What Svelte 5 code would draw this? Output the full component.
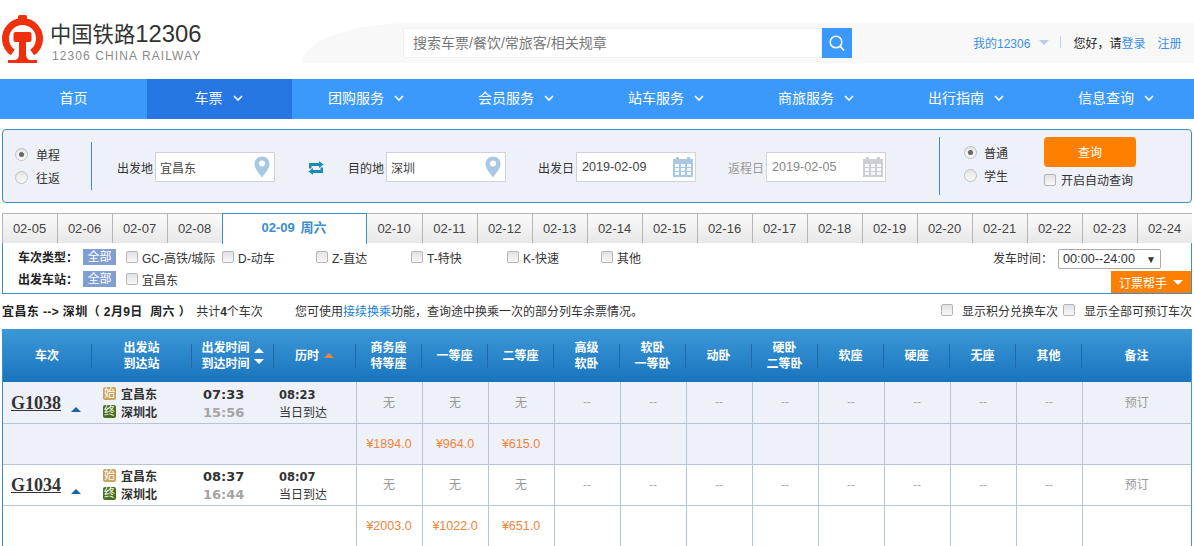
<script>
  const navItems = [
    { label: '车票', active: true },
    { label: '团购服务' },
    { label: '会员服务' },
    { label: '站车服务' },
    { label: '商旅服务' },
    { label: '出行指南' },
    { label: '信息查询' }
  ];

  const datesBefore = ['02-05', '02-06', '02-07', '02-08'];
  const datesAfter = ['02-10', '02-11', '02-12', '02-13', '02-14', '02-15', '02-16', '02-17', '02-18', '02-19', '02-20', '02-21', '02-22', '02-23', '02-24'];

  const trainTypes = [
    { label: 'GC-高铁/城际', width: 96 },
    { label: 'D-动车', width: 94 },
    { label: 'Z-直达', width: 95 },
    { label: 'T-特快', width: 96 },
    { label: 'K-快速', width: 94 },
    { label: '其他', width: 94 }
  ];

  const seatHeads = [
    ['商务座', '特等座'], ['一等座'], ['二等座'], ['高级', '软卧'], ['软卧', '一等卧'], ['动卧'],
    ['硬卧', '二等卧'], ['软座'], ['硬座'], ['无座'], ['其他']
  ];

  const trains = [
    { no: 'G1038', dep: '07:33', arr: '15:56', dur: '08:23', prices: ['¥1894.0', '¥964.0', '¥615.0'], odd: true },
    { no: 'G1034', dep: '08:37', arr: '16:44', dur: '08:07', prices: ['¥2003.0', '¥1022.0', '¥651.0'], odd: false }
  ];

  const emptySeats = Array(8).fill('--');
  const emptyPrices = Array(9).fill('');
</script>

{#snippet chevron()}
  <svg class="chevron" width="10" height="7" viewBox="0 0 10 7"><path d="M1 1l4 4 4-4" fill="none" stroke="#fff" stroke-width="1.6" /></svg>
{/snippet}

{#snippet pin()}
  <svg class="field-icon" width="16" height="22" viewBox="0 0 16 22">
    <path d="M8 0.5C3.6 0.5 0.5 3.8 0.5 8c0 5 5 9.500 7.500 13.500C10.500 17.500 15.500 13 15.500 8 15.500 3.800 12.400 0.500 8 0.500z" fill="#a9c8e2" />
    <circle cx="8" cy="7.500" r="3" fill="#fff" />
  </svg>
{/snippet}

{#snippet calendar(color)}
  <svg class="field-icon cal" width="20" height="20" viewBox="0 0 20 20">
    <rect x="0" y="2" width="20" height="18" fill={color} />
    <rect x="3" y="0" width="3" height="4" fill={color} />
    <rect x="14" y="0" width="3" height="4" fill={color} />
    <g fill="#f4f7fb">
      <rect x="2" y="7" width="4" height="3" /><rect x="8" y="7" width="4" height="3" /><rect x="14" y="7" width="4" height="3" />
      <rect x="2" y="11" width="4" height="3" /><rect x="8" y="11" width="4" height="3" /><rect x="14" y="11" width="4" height="3" />
      <rect x="2" y="15" width="4" height="3" /><rect x="8" y="15" width="4" height="3" /><rect x="14" y="15" width="4" height="3" />
    </g>
  </svg>
{/snippet}

<header class="top">
  <div class="brand">
    <svg class="logo" width="46" height="50" viewBox="0 14 46 50">
      <path d="M12.800 52.500A17 17 0 1 1 32.200 52.500" fill="none" stroke="#f0300c" stroke-width="7" />
      <rect x="18" y="15" width="9" height="5" rx="2" fill="#f0300c" />
      <path d="M15.500 32h14q2 0 2 2v6q0 2-2 2h-3.500v13q0 3 3 5h8v3H8v-3h8q3-2 3-5V42h-3.500q-2 0-2-2v-6q0-2 2-2z" fill="#f0300c" />
    </svg>
    <div class="brand-text">
      <div class="brand-name">中国铁路<span>12306</span></div>
      <div class="brand-sub">12306 CHINA RAILWAY</div>
    </div>
  </div>
  <div class="top-right">
    <div class="search-box">搜索车票/餐饮/常旅客/相关规章</div>
    <div class="search-btn">
      <svg width="18" height="18" viewBox="0 0 18 18"><circle cx="8" cy="8" r="5.800" fill="none" stroke="#fff" stroke-width="1.500" /><path d="M12 12l4 4.500" stroke="#fff" stroke-width="1.700" /></svg>
    </div>
    <div class="account">
      <span class="blue">我的12306</span>
      <i class="tri-down"></i>
      <i class="sep"></i>
      <span class="hello">您好，请<span class="blue">登录</span></span>
      <span class="blue reg">注册</span>
    </div>
  </div>
</header>

<nav class="nav">
  <div class="nav-item home">首页</div>
  {#each navItems as item}
    <div class="nav-item" class:active={item.active}>{item.label}{@render chevron()}</div>
  {/each}
</nav>

<section class="panel">
  <div class="trip-type">
    <label class="radio-line"><i class="radio on"></i>单程</label>
    <label class="radio-line"><i class="radio"></i>往返</label>
  </div>
  <div class="field from">
    <span>出发地</span>
    <div class="input">宜昌东{@render pin()}</div>
  </div>
  <svg class="swap" width="16" height="14" viewBox="0 0 16 14">
    <path d="M11 0l4.500 3.500L11 7V5H3.500v2.500H1V2h10z" fill="#1a8bb8" />
    <path d="M5 14L0.500 10.500 5 7v2h7.500V6.500H15V12H5z" fill="#1a8bb8" />
  </svg>
  <div class="field to">
    <span>目的地</span>
    <div class="input">深圳{@render pin()}</div>
  </div>
  <div class="field date">
    <span>出发日</span>
    <div class="input num">2019-02-09{@render calendar('#a9c8e2')}</div>
  </div>
  <div class="field date disabled">
    <span>返程日</span>
    <div class="input num">2019-02-05{@render calendar('#cbcfd6')}</div>
  </div>
  <div class="ticket-type">
    <label class="radio-line"><i class="radio on"></i>普通</label>
    <label class="radio-line"><i class="radio"></i>学生</label>
  </div>
  <div class="query">
    <button class="query-btn">查询</button>
    <label class="auto"><i class="cb"></i>开启自动查询</label>
  </div>
</section>

<div class="tabs">
  {#each datesBefore as d}<div class="tab">{d}</div>{/each}
  <div class="tab current">02-09 周六</div>
  {#each datesAfter as d}<div class="tab">{d}</div>{/each}
</div>

<section class="filter">
  <div class="filter-left">
    <div class="filter-row">
      <b class="filter-label">车次类型：</b>
      <span class="all">全部</span>
      {#each trainTypes as t}
        <label class="opt" style="width: {t.width}px"><i class="cb"></i>{t.label}</label>
      {/each}
    </div>
    <div class="filter-row">
      <b class="filter-label">出发车站：</b>
      <span class="all">全部</span>
      <label class="opt"><i class="cb"></i>宜昌东</label>
    </div>
  </div>
  <div class="filter-right">
    <div class="time-row">
      <span>发车时间：</span>
      <div class="time-select">00:00--24:00<i>▼</i></div>
    </div>
    <div class="helper">订票帮手<i class="tri-down white"></i></div>
  </div>
</section>

<div class="summary">
  <div class="sum-left"><b>宜昌东 --&gt; 深圳（ 2月9日&nbsp; 周六 ）</b><span class="count">共计<b>4</b>个车次</span></div>
  <div class="sum-mid">您可使用<span class="link">接续换乘</span>功能，查询途中换乘一次的部分列车余票情况。</div>
  <div class="sum-right">
    <label><i class="cb"></i>显示积分兑换车次</label>
    <label><i class="cb"></i>显示全部可预订车次</label>
  </div>
</div>

<div class="table-wrap">
  <table>
    <colgroup>
      <col style="width: 89px" /><col style="width: 100px" /><col style="width: 82px" /><col style="width: 82px" />
      {#each seatHeads as _}<col style="width: 66px" />{/each}
      <col style="width: 109px" />
    </colgroup>
    <thead>
      <tr>
        <th><div class="th">车次</div></th>
        <th><div class="th">出发站<br />到达站</div></th>
        <th>
          <div class="th sort">
            <span>出发时间<br />到达时间</span>
            <span class="arrows"><i class="tri-up white"></i><i class="tri-down white"></i></span>
          </div>
        </th>
        <th><div class="th sort">历时<i class="tri-up orange"></i></div></th>
        {#each seatHeads as h}
          <th><div class="th">{#each h as line, i}{#if i}<br />{/if}{line}{/each}</div></th>
        {/each}
        <th><div class="th last">备注</div></th>
      </tr>
    </thead>
    <tbody>
      {#each trains as t}
        <tr class:odd={t.odd}>
          <td class="info no"><span class="train-no">{t.no}</span><i class="tri-up navy"></i></td>
          <td class="info">
            <div class="station"><i class="badge start">始</i>宜昌东</div>
            <div class="station"><i class="badge end">终</i>深圳北</div>
          </td>
          <td class="info times"><b>{t.dep}</b><b class="arr">{t.arr}</b></td>
          <td class="info dur"><b>{t.dur}</b><span>当日到达</span></td>
          <td class="seat">无</td><td class="seat">无</td><td class="seat">无</td>
          {#each emptySeats as s}<td class="seat dash">{s}</td>{/each}
          <td class="seat">预订</td>
        </tr>
        <tr class:odd={t.odd}>
          <td colspan="4" class="info"></td>
          {#each t.prices as p}<td class="seat price">{p}</td>{/each}
          {#each emptyPrices as e}<td class="seat blank">{e}</td>{/each}
        </tr>
      {/each}
    </tbody>
  </table>
</div>

<style>
  :global(body) {
    margin: 0;
    overflow: hidden;
    background: #fff;
    font-family: "Liberation Sans", "Noto Sans CJK SC", sans-serif;
    font-size: 12px;
    color: #333;
  }

  i { font-style: normal; display: inline-block; }
  label { display: inline-flex; align-items: center; }

  .blue { color: #3b8fe8; }

  /* top bar */
  .top {
    display: flex;
    height: 79px;
  }

  .brand {
    display: flex;
    width: 302px;
    flex: none;
  }

  .logo { margin-top: 14px; flex: none; }

  .brand-text { margin-left: 4px; }

  .brand-name {
    margin-top: 20px;
    height: 28px;
    line-height: 28px;
    font-size: 21.300px;
    color: #333;
    white-space: nowrap;
  }

  .brand-name span { font-size: 23.800px; }

  .brand-sub {
    margin-top: 1px;
    margin-left: 2px;
    font-size: 12px;
    line-height: 14px;
    letter-spacing: 1.100px;
    color: #8a8a8a;
    white-space: nowrap;
  }

  .top-right {
    flex: 1;
    display: flex;
    align-items: center;
    height: 40px;
    margin-top: 23px;
    padding-left: 101px;
    background: #f8f8f8;
    border-top-left-radius: 110px 40px;
  }

  .search-box {
    width: 408px;
    height: 28px;
    line-height: 28px;
    padding-left: 9px;
    border: 1px solid #f0f0f0;
    background: #fff;
    font-size: 14px;
    color: #777;
  }

  .search-btn {
    width: 30px;
    height: 30px;
    background: #3b99fc;
    display: flex;
    align-items: center;
    justify-content: center;
  }

  .account {
    display: flex;
    align-items: center;
    margin-left: 121px;
    padding-bottom: 2px;
    white-space: nowrap;
  }

  .sep {
    width: 1px;
    height: 12px;
    background: #b9d4ef;
    margin: 0 12px 0 11px;
  }

  .hello { color: #222; }
  .reg { margin-left: 12px; }

  .tri-down {
    width: 0;
    height: 0;
    border: 5px solid transparent;
    border-top: 5px solid #b4cdea;
    border-bottom: 0;
    margin-left: 9px;
  }

  .tri-down.white { border-top-color: #fff; margin-left: 0; }

  .tri-up {
    width: 0;
    height: 0;
    border: 5px solid transparent;
    border-bottom: 5px solid #fff;
    border-top: 0;
  }

  .tri-up.orange { border-bottom-color: #f0853c; margin-left: 1px; }
  .tri-up.navy { border-bottom-color: #1565ad; margin-left: 10px; vertical-align: -3px; }

  /* nav */
  .nav {
    display: flex;
    height: 40px;
    background: #3b99fc;
    color: #fff;
    font-size: 14px;
  }

  .nav-item {
    width: 148px;
    padding: 0 2px 5px 0;
    box-sizing: content-box;
    height: 35px;
    display: flex;
    align-items: center;
    justify-content: center;
  }

  .nav-item.home { width: 147px; padding-right: 0; }
  .nav-item.active { width: 143px; background: #2676e3; }

  .chevron { margin-left: 10px; margin-top: 3px; }

  /* search panel */
  .panel {
    display: flex;
    height: 72px;
    margin: 10px 2px 0;
    border: 1px solid #3a8fc4;
    border-radius: 4px;
    background: #eef1f8;
  }

  .trip-type {
    width: 76px;
    height: 48px;
    margin-top: 12px;
    padding-left: 12px;
    border-right: 1px solid #3a8fc4;
    display: flex;
    flex-direction: column;
    justify-content: center;
    gap: 7px;
    flex: none;
  }

  .radio-line {
    height: 16px;
    color: #333;
    white-space: nowrap;
  }

  .radio {
    width: 11px;
    height: 11px;
    border-radius: 50%;
    border: 1px solid #c0c0c0;
    background: linear-gradient(#e4e4e4, #fafafa);
    margin-right: 8px;
    position: relative;
  }

  .radio.on::after {
    content: '';
    position: absolute;
    left: 3px;
    top: 3px;
    width: 5px;
    height: 5px;
    border-radius: 50%;
    background: #666;
  }

  .field {
    display: flex;
    align-items: center;
    margin-top: 22px;
    height: 30px;
    flex: none;
    white-space: nowrap;
  }

  .field > span { width: 36px; margin-right: 2px; color: #333; }
  .field.from { margin-left: 25px; }
  .field.to { margin-left: 24px; }
  .field.date { margin-left: 32px; }
  .field.disabled { color: #999; }
  .field.disabled > span { color: #999; }

  .input {
    width: 114px;
    height: 28px;
    padding-left: 4px;
    display: flex;
    align-items: center;
    justify-content: space-between;
    border: 1px solid #cfd3d9;
    background: #fff;
    color: #444;
  }

  .input.num { padding-left: 5px; width: 113px; font-size: 12.600px; }
  .disabled .input { color: #888; }

  .field-icon { margin-right: 4px; }
  .field-icon.cal { margin-right: 2px; }

  .swap { margin: 31px 0 0 33px; flex: none; }

  .ticket-type {
    width: 80px;
    height: 51px;
    margin: 7px 0 0 53px;
    padding: 7px 0 0 24px;
    border-left: 1px solid #3a8fc4;
    display: flex;
    flex-direction: column;
    gap: 7px;
    flex: none;
    box-sizing: content-box;
  }

  .ticket-type .radio { margin-right: 7px; }

  .query {
    width: 92px;
    margin-top: 7px;
    flex: none;
  }

  .query-btn {
    display: block;
    width: 92px;
    height: 30px;
    padding: 0 0 2px;
    border: 0;
    border-radius: 4px;
    background: #ff8000;
    color: #fff;
    font-family: inherit;
    font-size: 12px;
  }

  .auto {
    margin-top: 4px;
    color: #333;
    white-space: nowrap;
  }

  .cb {
    width: 10px;
    height: 10px;
    border: 1px solid #b5b5b5;
    border-radius: 2px;
    background: linear-gradient(#e2e2e2, #f8f8f8);
    margin-right: 5px;
    flex: none;
  }

  /* date tabs */
  .tabs {
    display: flex;
    height: 30px;
    margin: 10px 2px -1px;
    position: relative;
  }

  .tab {
    width: 55px;
    box-sizing: border-box;
    padding-right: 1px;
    border-top: 1px solid #b5b5b5;
    border-left: 1px solid #b5b5b5;
    background: linear-gradient(#fafafa, #e8e8e8);
    font-size: 13px;
    line-height: 30px;
    text-align: center;
    color: #444;
  }

  .tab.current {
    width: 145px;
    border: 1px solid #3a8fc4;
    border-bottom: 0;
    background: #fff;
    font-weight: bold;
    color: #3b8ccc;
    height: 31px;
    line-height: 28px;
    word-spacing: 2px;
  }

  .tab.current + .tab { border-left: 0; }

  /* filter */
  .filter {
    display: flex;
    justify-content: space-between;
    height: 50px;
    margin: 0 2px;
    border: 1px solid #3a8fc4;
    background: #fff;
  }

  .filter-left { padding: 3px 0 0 15px; }

  .filter-row {
    display: flex;
    align-items: center;
    height: 22px;
    white-space: nowrap;
  }

  .filter-label { width: 65px; color: #222; padding-bottom: 2px; }

  .all {
    width: 33px;
    height: 16px;
    line-height: 16px;
    text-align: center;
    background: #7f9fd3;
    color: #fff;
    margin-right: 10px;
  }

  .opt { color: #333; }
  .opt .cb { margin-right: 4px; }

  .filter-right {
    display: flex;
    flex-direction: column;
    align-items: flex-end;
    justify-content: space-between;
  }

  .time-row {
    display: flex;
    align-items: center;
    margin: 6px 30px 0 0;
    color: #333;
  }

  .time-select {
    width: 93px;
    height: 18px;
    padding: 0 4px;
    display: flex;
    align-items: center;
    justify-content: space-between;
    border: 1px solid #aaa;
    border-radius: 2px;
    font-size: 12.700px;
    white-space: nowrap;
  }

  .time-select i { font-size: 10px; }

  .time-row > span { width: 65px; padding-bottom: 3px; }

  .helper {
    width: 80px;
    height: 22px;
    display: flex;
    align-items: center;
    justify-content: center;
    gap: 6px;
    background: #ff8000;
    color: #fff;
  }

  /* summary */
  .summary {
    display: flex;
    align-items: center;
    box-sizing: border-box;
    height: 35px;
    padding-bottom: 3px;
    margin: 0 2px;
    white-space: nowrap;
    color: #333;
  }

  .sum-left { width: 293px; flex: none; }
  .sum-left > b { color: #222; letter-spacing: 0.4px; }
  .count { margin-left: 5px; }
  .link { color: #1a7fd4; }

  .sum-right {
    margin-left: auto;
    display: flex;
    gap: 5px;
  }

  .sum-right .cb { margin-right: 9px; }

  /* result table */
  .table-wrap {
    margin: 0 2px;
    border-left: 1px solid #3a8fc4;
    border-right: 1px solid #3a9fd0;
  }

  table {
    width: 1188px;
    table-layout: fixed;
    border-collapse: collapse;
  }

  thead tr {
    height: 53px;
    background: linear-gradient(#3c98d8, #1a74bd);
  }

  th {
    padding: 0;
    color: #fff;
    font-size: 12px;
    line-height: 16px;
  }

  .th {
    height: 24px;
    display: flex;
    align-items: center;
    justify-content: center;
    text-align: center;
    border-right: 1px solid #1f69a6;
    white-space: nowrap;
  }

  .th.last { border-right: 0; }
  .sort { gap: 4px; }

  .arrows {
    display: flex;
    flex-direction: column;
    gap: 6px;
    margin-top: 1px;
  }

  .arrows .tri-down { display: block; }
  .arrows .tri-up { display: block; }

  tbody tr { height: 41px; background: #fff; }
  tbody tr.odd { background: #eef1f8; }

  td {
    padding: 0;
    border-bottom: 1px solid #b4c6d6;
    text-align: center;
  }

  td.info { text-align: left; border-left: 0; }
  td.no { padding-top: 2px; }
  td.times, td.dur { padding-top: 3px; }
  td.seat { border-left: 1px solid #b4c6d6; color: #999; padding-bottom: 2px; }
  td.dash { color: #aaa; padding-bottom: 0; }
  td.blank { padding-bottom: 0; }
  td.price { color: #f0853c; font-size: 12.500px; padding-bottom: 0; }

  .train-no {
    margin-left: 8px;
    font-family: "Liberation Serif", serif;
    font-size: 18px;
    font-weight: bold;
    text-decoration: underline;
    color: #333;
  }

  .station {
    display: flex;
    align-items: center;
    height: 18px;
    margin-left: 11px;
    font-weight: bold;
    color: #333;
    white-space: nowrap;
  }

  .badge {
    width: 13px;
    height: 13px;
    line-height: 13px;
    margin-right: 5px;
    text-align: center;
    font-size: 11px;
    font-weight: normal;
    border-radius: 2px;
    color: #fff;
  }

  .badge.start { background: #c9a25e; }
  .badge.end { background: #47701c; }

  .times b, .dur b {
    display: block;
    line-height: 18px;
    white-space: nowrap;
    font-family: "DejaVu Sans", sans-serif;
  }

  .times b { margin-left: 11px; font-size: 13px; color: #333; }
  .times b.arr { color: #a4a4a4; }
  .dur b { margin-left: 5px; font-size: 11.500px; color: #333; }

  .dur span {
    display: block;
    margin-left: 5px;
    line-height: 18px;
    color: #333;
    white-space: nowrap;
  }
</style>
